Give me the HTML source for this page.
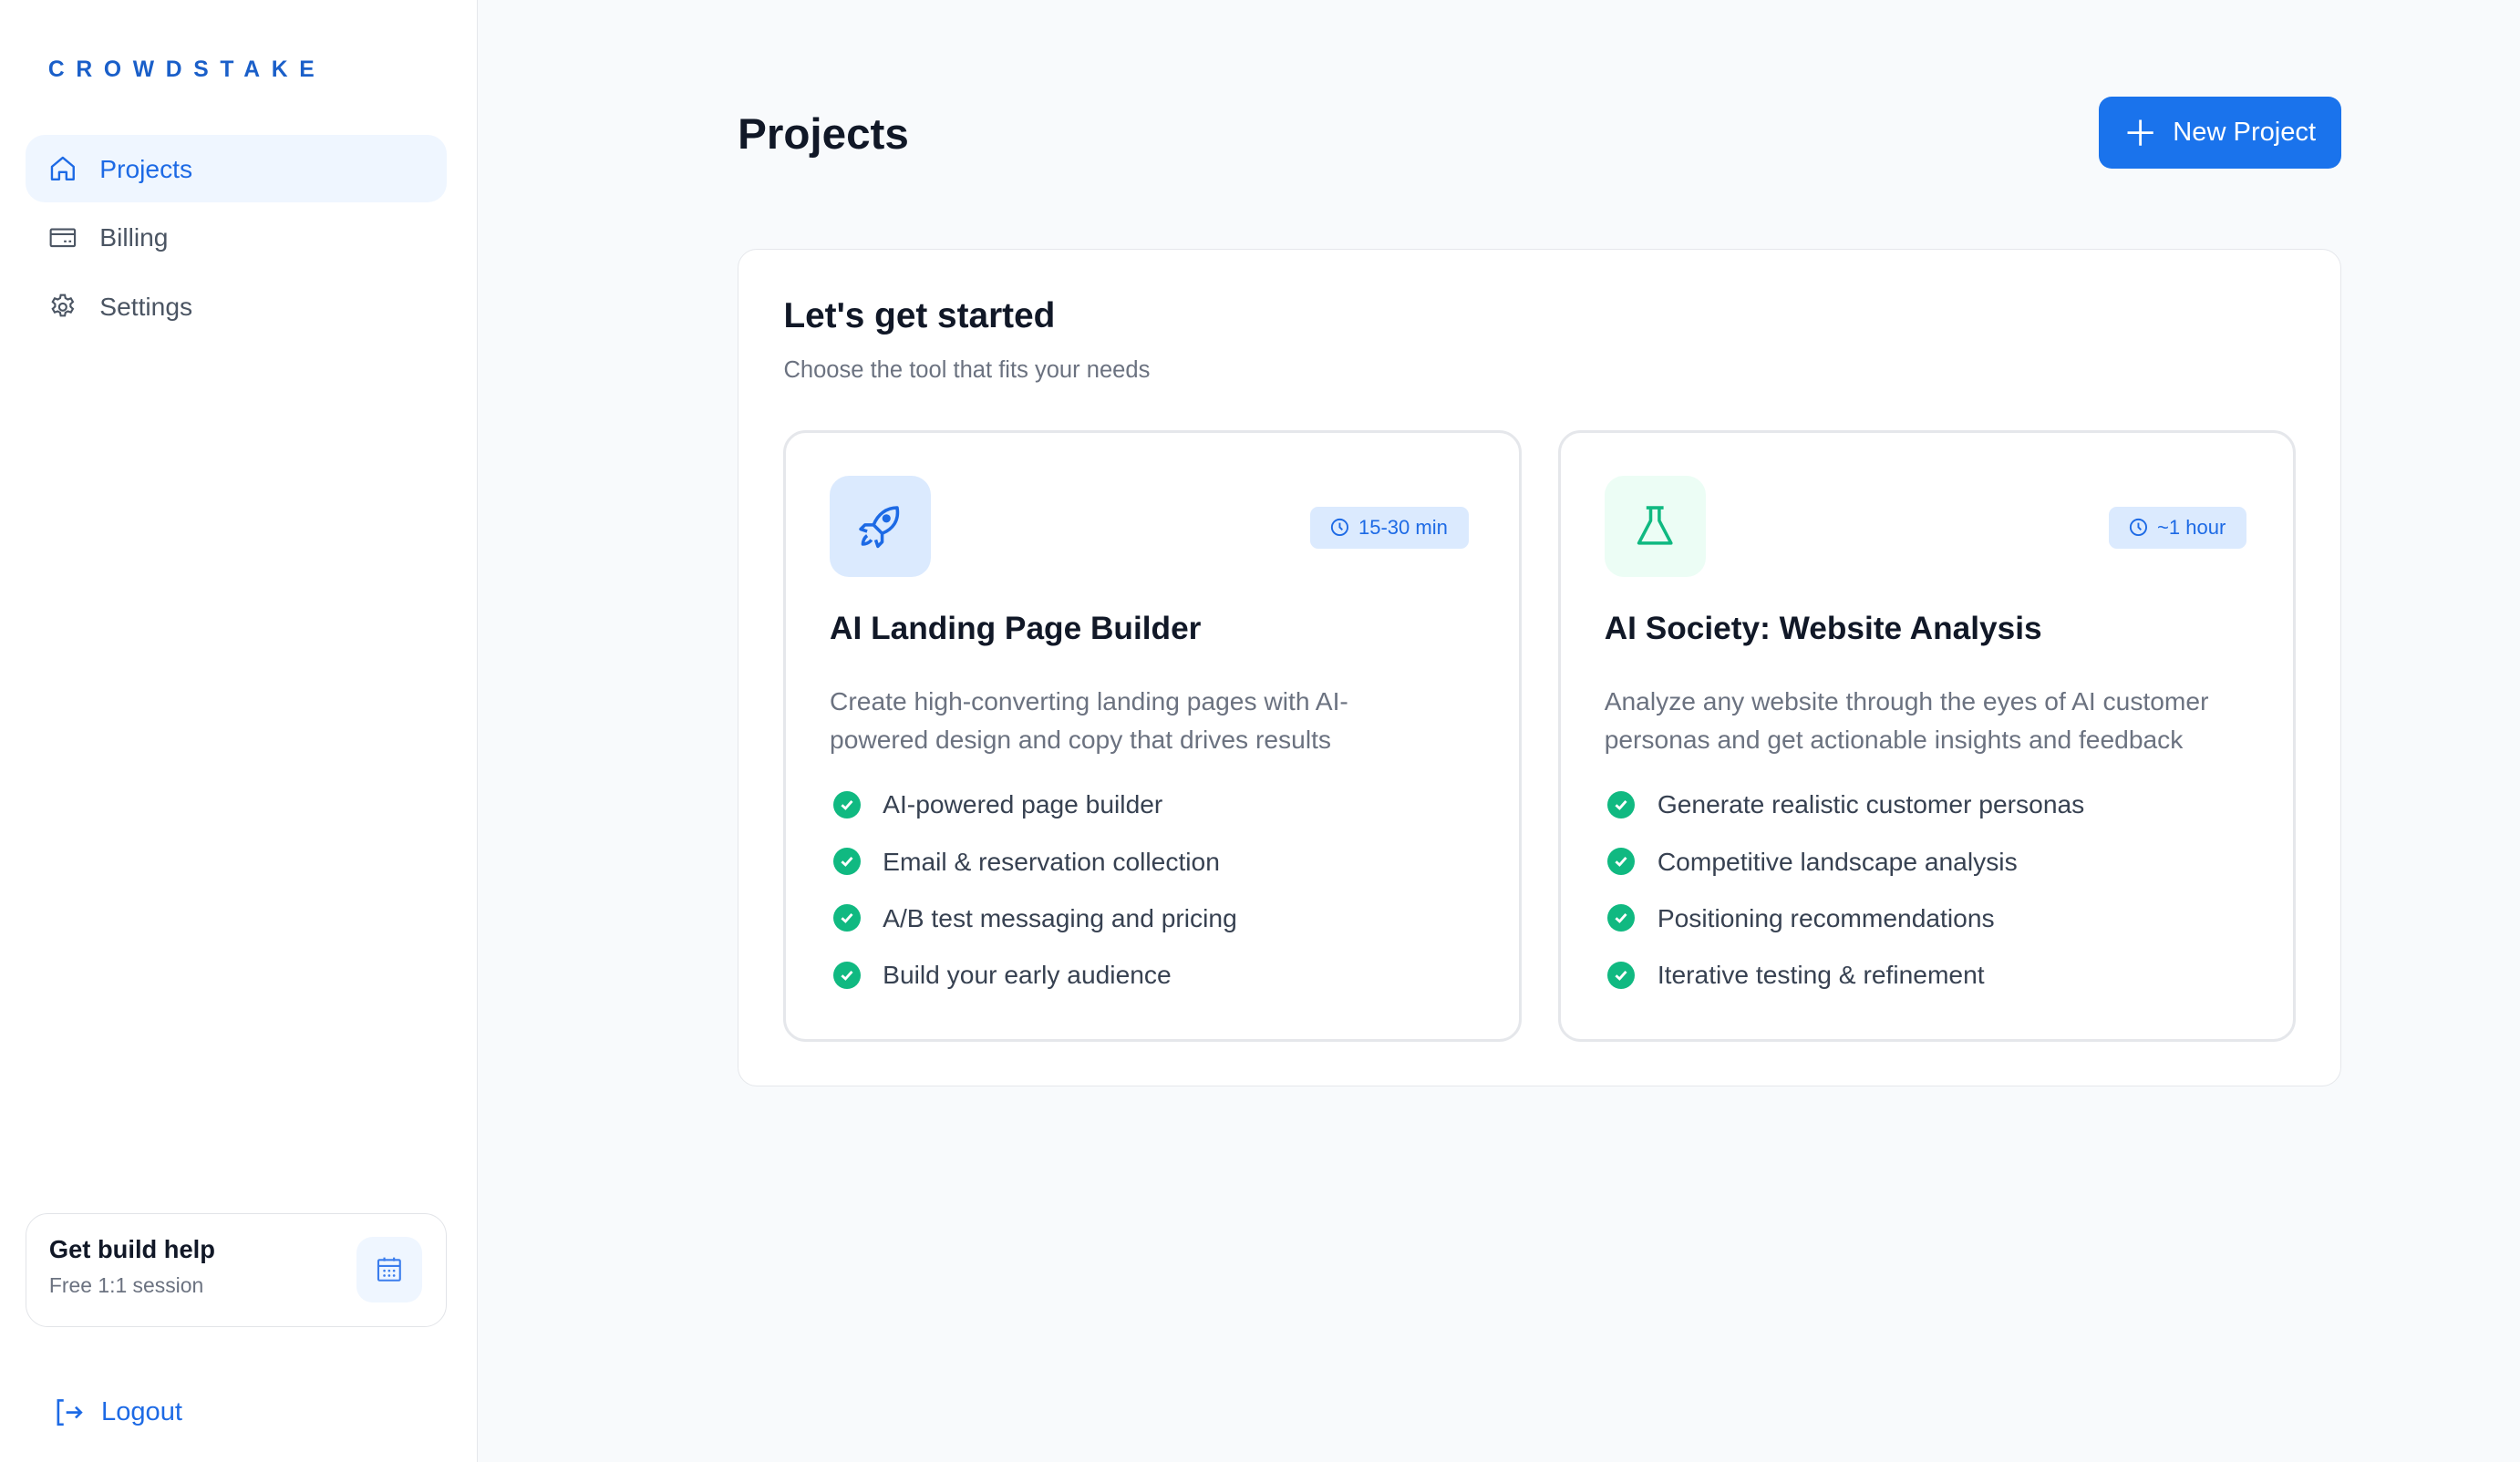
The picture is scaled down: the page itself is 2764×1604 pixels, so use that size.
<!DOCTYPE html>
<html><head><meta charset="utf-8"><style>
*{box-sizing:border-box;margin:0;padding:0}
html,body{width:2764px;height:1604px;overflow:hidden}
body{background:#f8fafc;font-family:"Liberation Sans",sans-serif}
#w{zoom:1.76276;width:1568px;height:910px;position:relative}
.sb{position:absolute;left:0;top:0;width:297px;height:910px;background:#fff;border-right:1px solid #e5e7eb}
.logo{position:absolute;left:30px;top:36px;font-weight:900;font-size:14px;letter-spacing:7.2px;color:#1a5fc9}
.nav{position:absolute;left:16px;width:262px;height:42px;border-radius:12px;display:flex;align-items:center;padding-left:14px;font-size:16px;color:#4b5563}
.nav svg{margin-right:14px}
.nav.a{background:#eff6ff;color:#1d6ae5}
.help{position:absolute;left:16px;top:755px;width:262px;height:71px;border:1px solid #e2e4e8;border-radius:14px;background:#fff}
.help b{position:absolute;left:14px;top:13px;font-size:15.5px;color:#111827}
.help span{position:absolute;left:14px;top:37px;font-size:13px;color:#6b7280}
.help .ic{position:absolute;left:205px;top:14px;width:41px;height:41px;border-radius:10px;background:#eff6ff;display:flex;align-items:center;justify-content:center}
.logout{position:absolute;left:33px;top:869px;display:flex;align-items:center;font-size:16.5px;color:#1d6ae5}
.logout svg{margin-right:10px}
h1{position:absolute;left:459px;top:68px;font-size:27px;font-weight:600;color:#111827}
.btn{position:absolute;left:1306px;top:60px;width:151px;height:45px;background:#1a73ec;border-radius:8px;color:#fff;font-size:16.5px;display:flex;align-items:center;justify-content:center}
.btn svg{margin-right:10px}
.outer{position:absolute;left:459px;top:155px;width:998px;height:521px;background:#fff;border:1px solid #e5e7eb;border-radius:12px}
.outer h2{position:absolute;left:28px;top:29px;font-size:22px;font-weight:600;color:#111827}
.outer .sub{position:absolute;left:28px;top:67px;font-size:14.5px;color:#6b7280}
.card{position:absolute;top:112px;width:459px;height:381px;border:2px solid #e5e7eb;border-radius:14px;background:#fff}
.ib{position:absolute;left:27px;top:27px;width:63px;height:63px;border-radius:12px;display:flex;align-items:center;justify-content:center}
.badge{position:absolute;top:46px;height:26px;border-radius:5px;background:#dbeafe;color:#1d6ae5;font-size:12.5px;display:flex;align-items:center;padding:0 13px 0 12px}
.badge svg{margin-right:5px}
.card h3{position:absolute;left:27px;top:111px;font-size:20px;font-weight:600;color:#111827}
.card p{position:absolute;left:27px;top:155px;white-space:nowrap;font-size:16px;line-height:24px;color:#6b7280}
.card ul{position:absolute;left:29px;top:214px;list-style:none}
.card li{height:35.3px;display:flex;align-items:center;font-size:16px;color:#374151}
.card li i{width:17px;height:17px;border-radius:50%;background:#10b981;margin-right:14px;display:flex;align-items:center;justify-content:center}
</style></head><body><div id="w">
<div class="sb">
<div class="logo">CROWDSTAKE</div>
<div class="nav a" style="top:84px"><svg width="18" height="18" viewBox="0 0 24 24" fill="none" stroke="#1d6ae5" stroke-width="1.8" stroke-linejoin="round"><path d="M3 10.5 12 3l9 7.5V21h-6v-6H9v6H3z"/></svg>Projects</div>
<div class="nav" style="top:127px"><svg width="18" height="18" viewBox="0 0 24 24" fill="none" stroke="#4b5563" stroke-width="1.6"><rect x="2" y="5" width="20" height="14" rx="1"/><path d="M2 9h20M13 15h2M17 15h2"/></svg>Billing</div>
<div class="nav" style="top:170px"><svg width="18" height="18" viewBox="0 0 24 24" fill="none" stroke="#4b5563" stroke-width="1.6"><circle cx="12" cy="12" r="3"/><path d="M10.3 2h3.4l.5 2.6 2 1.1 2.5-.9 1.7 2.9-2 1.8v2.2l2 1.8-1.7 2.9-2.5-.9-2 1.1-.5 2.6h-3.4l-.5-2.6-2-1.1-2.5.9-1.7-2.9 2-1.8V9.5l-2-1.8 1.7-2.9 2.5.9 2-1.1z"/></svg>Settings</div>
<div class="help"><b>Get build help</b><span>Free 1:1 session</span><div class="ic"><svg width="18" height="18" viewBox="0 0 24 24" fill="none" stroke="#3b7ded" stroke-width="1.6"><rect x="3" y="4" width="18" height="17" rx="1"/><path d="M3 9h18M8 2v3M16 2v3"/><g fill="#3b7ded" stroke="none"><circle cx="8" cy="13" r="1"/><circle cx="12" cy="13" r="1"/><circle cx="16" cy="13" r="1"/><circle cx="8" cy="17" r="1"/><circle cx="12" cy="17" r="1"/><circle cx="16" cy="17" r="1"/></g></svg></div></div>
<div class="logout"><svg width="20" height="20" viewBox="0 0 24 24" fill="none" stroke="#1d6ae5" stroke-width="1.8"><path d="M8 3H4v18h4M10 12h11M17 8l4 4-4 4"/></svg>Logout</div>
</div>
<h1>Projects</h1>
<div class="btn"><svg width="20" height="20" viewBox="0 0 20 20" stroke="#fff" stroke-width="1.6"><path d="M10 2v16M2 10h16"/></svg>New Project</div>
<div class="outer">
<h2>Let's get started</h2>
<div class="sub">Choose the tool that fits your needs</div>
<div class="card" style="left:28px">
<div class="ib" style="background:#dbeafe"><svg width="32" height="32" viewBox="0 0 24 24" fill="none" stroke="#1d6ae5" stroke-width="1.5" stroke-linejoin="round"><path d="M20 3c-5 0-9 3-11 8l4 4c5-2 8-6 7-12z"/><path d="M9 11l-4 0-2 2 3 1M13 15v4l-2 2-1-3"/><circle cx="15" cy="8" r="1.2" fill="#1d6ae5"/><path d="M6 16c-1.5 1-2 3-2 4 1 0 3-.5 4-2"/></svg></div>
<div class="badge" style="left:326px"><svg width="13" height="13" viewBox="0 0 24 24" fill="none" stroke="#1d6ae5" stroke-width="2"><circle cx="12" cy="12" r="9"/><path d="M12 7v5l3 3"/></svg>15-30 min</div>
<h3>AI Landing Page Builder</h3>
<p>Create high-converting landing pages with AI-<br>powered design and copy that drives results</p>
<ul>
<li><i><svg width="9" height="9" viewBox="0 0 10 10" fill="none" stroke="#fff" stroke-width="1.8"><path d="M1.5 5.2 4 7.5 8.5 2.5"/></svg></i>AI-powered page builder</li>
<li><i><svg width="9" height="9" viewBox="0 0 10 10" fill="none" stroke="#fff" stroke-width="1.8"><path d="M1.5 5.2 4 7.5 8.5 2.5"/></svg></i>Email &amp; reservation collection</li>
<li><i><svg width="9" height="9" viewBox="0 0 10 10" fill="none" stroke="#fff" stroke-width="1.8"><path d="M1.5 5.2 4 7.5 8.5 2.5"/></svg></i>A/B test messaging and pricing</li>
<li><i><svg width="9" height="9" viewBox="0 0 10 10" fill="none" stroke="#fff" stroke-width="1.8"><path d="M1.5 5.2 4 7.5 8.5 2.5"/></svg></i>Build your early audience</li>
</ul></div>
<div class="card" style="left:510px">
<div class="ib" style="background:#ecfdf5"><svg width="32" height="32" viewBox="0 0 24 24" fill="none" stroke="#10b981" stroke-width="1.5" stroke-linejoin="round"><path d="M8 3h8M10 3v6l-5.5 10.5h15L14 9V3"/></svg></div>
<div class="badge" style="left:341px"><svg width="13" height="13" viewBox="0 0 24 24" fill="none" stroke="#1d6ae5" stroke-width="2"><circle cx="12" cy="12" r="9"/><path d="M12 7v5l3 3"/></svg>~1 hour</div>
<h3>AI Society: Website Analysis</h3>
<p>Analyze any website through the eyes of AI customer<br>personas and get actionable insights and feedback</p>
<ul>
<li><i><svg width="9" height="9" viewBox="0 0 10 10" fill="none" stroke="#fff" stroke-width="1.8"><path d="M1.5 5.2 4 7.5 8.5 2.5"/></svg></i>Generate realistic customer personas</li>
<li><i><svg width="9" height="9" viewBox="0 0 10 10" fill="none" stroke="#fff" stroke-width="1.8"><path d="M1.5 5.2 4 7.5 8.5 2.5"/></svg></i>Competitive landscape analysis</li>
<li><i><svg width="9" height="9" viewBox="0 0 10 10" fill="none" stroke="#fff" stroke-width="1.8"><path d="M1.5 5.2 4 7.5 8.5 2.5"/></svg></i>Positioning recommendations</li>
<li><i><svg width="9" height="9" viewBox="0 0 10 10" fill="none" stroke="#fff" stroke-width="1.8"><path d="M1.5 5.2 4 7.5 8.5 2.5"/></svg></i>Iterative testing &amp; refinement</li>
</ul></div>
</div>
</div></body></html>
